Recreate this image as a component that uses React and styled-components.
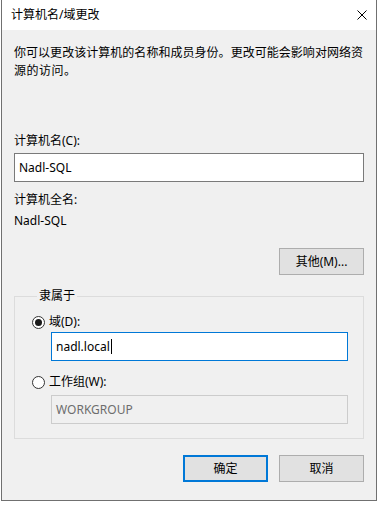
import React from 'react'
import styled, { createGlobalStyle } from 'styled-components'

const GlobalStyle = createGlobalStyle`
  html, body {
    margin: 0;
    padding: 0;
    background: #ffffff;
  }
  body {
    width: 381px;
    height: 505px;
    overflow: hidden;
    font-family: "Noto Sans", "Noto Sans CJK SC", sans-serif;
    font-size: 12px;
    line-height: 18px;
    color: #000;
  }
`

const Dialog = styled.div`
  margin-left: 1px;
  width: 376px;
  height: 501px;
  box-sizing: border-box;
  border: 1px solid #707070;
  border-top: none;
  display: flex;
  flex-direction: column;
  background: #f0f0f0;
`

const TitleBar = styled.div`
  height: 30px;
  flex: none;
  background: #fff;
  display: flex;
  align-items: center;
  justify-content: space-between;
  padding-left: 9px;
  padding-right: 9px;
`

const Title = styled.span`
  font-size: 12px;
`

const CloseIcon = () => (
  <svg width="10" height="10" viewBox="0 0 10 10">
    <path d="M0.5 0.5 L9.5 9.5 M9.5 0.5 L0.5 9.5" stroke="#000" strokeWidth="1" />
  </svg>
)

const Body = styled.div`
  flex: 1;
  display: flex;
  flex-direction: column;
  padding: 14px 12px 0 12px;
`

const Description = styled.div`
  margin: 0 0 52px 0;
`

const DescLine = styled.div`
  white-space: nowrap;
  width: ${p => (p.$full ? '349px' : 'auto')};
  text-align: ${p => (p.$full ? 'justify' : 'left')};
  text-align-last: ${p => (p.$full ? 'justify' : 'left')};
  text-justify: inter-character;
  letter-spacing: ${p => (p.$full ? '0' : '0.5px')};
`

const Label = styled.div`
  margin-top: ${p => p.$top || 0}px;
`

const TextBox = styled.div`
  box-sizing: border-box;
  height: 29px;
  margin-top: ${p => p.$top || 0}px;
  margin-left: ${p => p.$left || 0}px;
  width: ${p => p.$width || 350}px;
  padding-left: 4px;
  display: flex;
  align-items: center;
  background: ${p => (p.$disabled ? '#f0f0f0' : '#fff')};
  border: 1px solid ${p => (p.$focused ? '#0078d7' : p.$disabled ? '#cccccc' : '#7a7a7a')};
  color: ${p => (p.$disabled ? '#6d6d6d' : '#000')};
`

const Caret = styled.span`
  display: inline-block;
  width: 1px;
  height: 15px;
  background: #000;
  margin-left: 1px;
`

const Button = styled.div`
  box-sizing: border-box;
  width: 85px;
  height: 27px;
  display: flex;
  align-items: center;
  justify-content: center;
  background: #e1e1e1;
  border: ${p => (p.$default ? '2px solid #0078d7' : '1px solid #adadad')};
`

const RightRow = styled.div`
  display: flex;
  justify-content: flex-end;
  gap: 11px;
  margin-top: ${p => p.$top || 0}px;
`

const Group = styled.fieldset`
  margin: 12px 0 0 0;
  padding: 8px 15px 14px 17px;
  border: 1px solid #dcdcdc;
  min-width: 0;
  width: 350px;
  box-sizing: border-box;
`

const Legend = styled.legend`
  padding: 0 2px;
  margin-left: 5px;
  line-height: 18px;
`

const RadioRow = styled.div`
  display: flex;
  align-items: center;
  gap: 4px;
  margin-top: ${p => p.$top || 0}px;
`

const RadioCircle = styled.span`
  box-sizing: border-box;
  width: 13px;
  height: 13px;
  border-radius: 50%;
  border: 1px solid #333;
  background: #fff;
  display: flex;
  align-items: center;
  justify-content: center;
  &::after {
    content: '';
    width: 7px;
    height: 7px;
    border-radius: 50%;
    background: ${p => (p.$checked ? '#1a1a1a' : 'transparent')};
  }
`

export default function App() {
  return (
    <>
      <GlobalStyle />
      <Dialog>
        <TitleBar>
          <Title>计算机名/域更改</Title>
          <CloseIcon />
        </TitleBar>
        <Body>
          <Description>
            <DescLine $full>你可以更改该计算机的名称和成员身份。更改可能会影响对网络资</DescLine>
            <DescLine>源的访问。</DescLine>
          </Description>
          <Label>计算机名(C):</Label>
          <TextBox $top={3}>Nadl-SQL</TextBox>
          <Label $top={9}>计算机全名:</Label>
          <Label $top={3}>Nadl-SQL</Label>
          <RightRow $top={18}>
            <Button>其他(M)...</Button>
          </RightRow>
          <Group>
            <Legend>隶属于</Legend>
            <RadioRow>
              <RadioCircle $checked />
              <span>域(D):</span>
            </RadioRow>
            <TextBox $top={1} $left={19} $width={297} $focused>
              nadl.local<Caret />
            </TextBox>
            <RadioRow $top={12}>
              <RadioCircle />
              <span>工作组(W):</span>
            </RadioRow>
            <TextBox $top={4} $left={19} $width={297} $disabled>
              WORKGROUP
            </TextBox>
          </Group>
          <RightRow $top={16}>
            <Button $default>确定</Button>
            <Button>取消</Button>
          </RightRow>
        </Body>
      </Dialog>
    </>
  )
}
